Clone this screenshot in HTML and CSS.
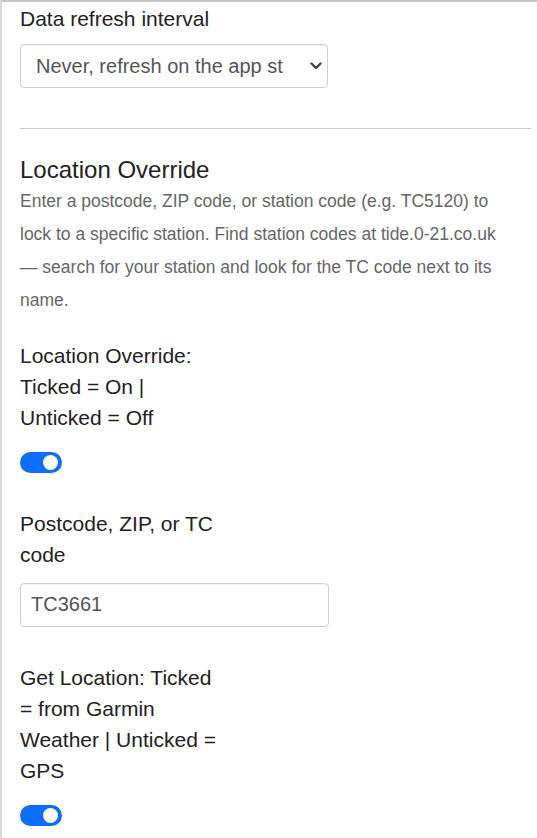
FILE: index.html
```html
<!DOCTYPE html>
<html lang="en">
<head>
  <meta charset="UTF-8" />
  <meta name="viewport" content="width=device-width, initial-scale=1.0"/>
  <title>Settings</title>
  <link rel="stylesheet" href="styles.css">
</head>
<body>
  <div class="panel">
    <div class="field">
      <label class="field-label" for="refresh">Data refresh interval</label>
      <div class="select-wrap">
        <select id="refresh" class="control">
          <option>Never, refresh on the app start</option>
          <option>Every 15 minutes</option>
          <option>Every hour</option>
        </select>
        <svg class="chevron" width="12" height="8" viewBox="0 0 12 8">
          <path d="M1.5 1.5 L6 6 L10.5 1.5" fill="none" stroke="#444" stroke-width="2.4" stroke-linecap="round" stroke-linejoin="round"/>
        </svg>
      </div>
    </div>

    <hr class="divider">

    <h2 class="section-title">Location Override</h2>
    <p class="description">Enter a postcode, ZIP code, or station code (e.g. TC5120) to lock to a specific station. Find station codes at tide.0-21.co.uk — search for your station and look for the TC code next to its name.</p>

    <div class="field first">
      <div class="field-label">Location Override: Ticked = On | Unticked = Off</div>
      <label class="switch">
        <input type="checkbox" checked>
        <span class="slider"></span>
      </label>
    </div>

    <div class="field">
      <label class="field-label" for="code">Postcode, ZIP, or TC code</label>
      <input id="code" class="control text-input" type="text" value="TC3661">
    </div>

    <div class="field">
      <div class="field-label">Get Location: Ticked = from Garmin Weather | Unticked = GPS</div>
      <label class="switch">
        <input type="checkbox" checked>
        <span class="slider"></span>
      </label>
    </div>
  </div>
</body>
</html>
```

FILE: styles.css
```css
body {
  margin: 0;
  background-color: #fff;
  color: #222;
  font-family: "Liberation Sans", Arial, Helvetica, sans-serif;
}

.panel {
  min-height: 100vh;
  box-sizing: border-box;
  border-top: 2px solid #c6c6c6;
  border-left: 2px solid #dadada;
  padding: 1px 6px 0 18px;
}

.field-label {
  display: block;
  width: 200px;
  font-size: 21px;
  line-height: 31px;
  color: #222;
}

.field.first {
  margin-top: 23px;
}

.field + .field {
  margin-top: 35px;
}

.select-wrap {
  position: relative;
  width: 308px;
  margin-top: 10px;
}

.control {
  display: block;
  width: 308px;
  height: 44px;
  box-sizing: border-box;
  border: 1px solid #cfcfcf;
  border-radius: 4px;
  background-color: #fff;
  color: #555;
  font-family: inherit;
  font-size: 20px;
  box-shadow: inset 0 1px 1px rgba(0, 0, 0, 0.04);
}

select.control {
  appearance: none;
  -webkit-appearance: none;
  padding: 0 44px 0 15px;
}

.chevron {
  position: absolute;
  right: 6px;
  top: 18px;
  pointer-events: none;
}

.text-input {
  width: 309px;
  margin-top: 13px;
  padding: 0 10px;
}

.divider {
  margin: 40px 0 0;
  border: 0;
  border-top: 1px solid #cccccc;
}

.section-title {
  margin: 27px 0 0;
  font-size: 24px;
  font-weight: normal;
  line-height: 28.8px;
  color: #222;
}

.description {
  margin: 0;
  max-width: 490px;
  font-size: 17.5px;
  line-height: 33px;
  color: #666;
}

.switch {
  display: block;
  position: relative;
  width: 42px;
  height: 21px;
  margin-top: 19px;
  cursor: pointer;
}

.switch input {
  display: none;
}

.slider {
  display: block;
  width: 42px;
  height: 21px;
  border-radius: 11px;
  background-color: #0d6efd;
}

.slider::after {
  content: "";
  position: absolute;
  top: 3px;
  right: 4px;
  width: 15px;
  height: 15px;
  border-radius: 50%;
  background-color: #fff;
}
```
